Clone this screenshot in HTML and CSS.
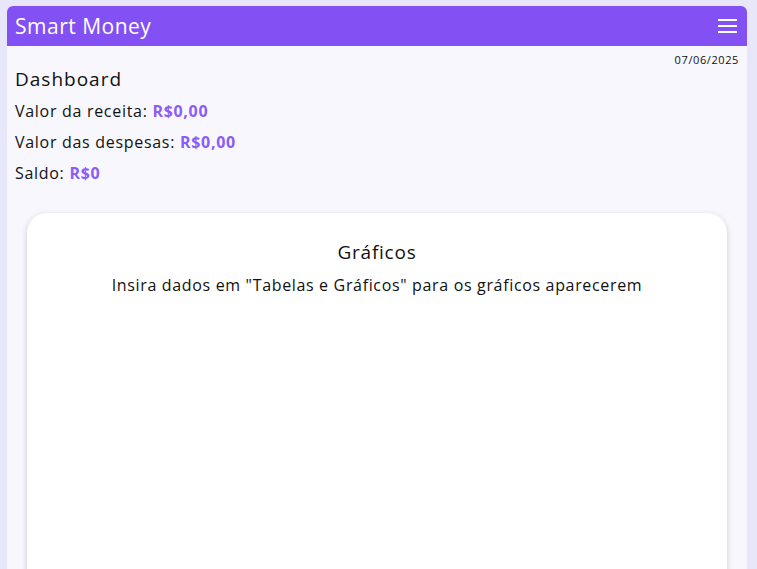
FILE: index.html
```html
<!DOCTYPE html>
<html lang="pt-BR">
<head>
<meta charset="utf-8">
<title>Smart Money</title>
<link rel="stylesheet" href="styles.css">
</head>
<body>
<div class="app">
  <header class="topbar">
    <span class="brand">Smart Money</span>
    <button class="menu" aria-label="Menu">
      <span></span><span></span><span></span>
    </button>
  </header>
  <main class="content">
    <div class="date">07/06/2025</div>
    <h1 class="title">Dashboard</h1>
    <p class="stat">Valor da receita: <strong>R$0,00</strong></p>
    <p class="stat">Valor das despesas: <strong>R$0,00</strong></p>
    <p class="stat">Saldo: <strong>R$0</strong></p>
    <section class="card">
      <h2 class="card-title">Gráficos</h2>
      <p class="card-text">Insira dados em "Tabelas e Gráficos" para os gráficos aparecerem</p>
    </section>
  </main>
</div>
</body>
</html>
```
FILE: styles.css
```css
* { box-sizing: border-box; }
html, body { height: 100%; }
body {
  margin: 0;
  padding: 6px 10px 0 7px;
  background: #e7e7f9;
  font-family: "Open Sans", sans-serif;
  color: #111;
  overflow: hidden;
}
.app {
  background: #f7f7fd;
  border-radius: 6px 6px 0 0;
  min-height: 100%;
}
.topbar {
  height: 40px;
  background: #8351f3;
  border-radius: 6px 6px 0 0;
  display: flex;
  align-items: center;
  justify-content: space-between;
  padding: 0 10px 0 8px;
}
.brand {
  color: #fff;
  font-size: 21px;
  letter-spacing: 0.5px;
}
.menu {
  width: 19px;
  height: 14px;
  padding: 0;
  border: 0;
  background: none;
  display: flex;
  flex-direction: column;
  justify-content: space-between;
}
.menu span {
  display: block;
  height: 2px;
  background: #fff;
}
.content {
  padding: 7px 8px 0 8px;
}
.date {
  text-align: right;
  font-size: 11px;
  line-height: 14px;
  letter-spacing: 0.6px;
}
.title {
  margin: 0;
  padding-bottom: 1px;
  font-size: 19px;
  font-weight: 400;
  line-height: 24px;
  letter-spacing: 1px;
}
.stat {
  margin: 8px 0 0;
  font-size: 16px;
  line-height: 23px;
  letter-spacing: 0.7px;
}
.stat strong {
  color: #8b5cf6;
  font-weight: 700;
}
.card {
  margin: 28px 12px 0;
  background: #fff;
  border-radius: 20px;
  box-shadow: 0 2px 6px rgba(0,0,0,0.18);
  height: 400px;
  text-align: center;
  padding-top: 26px;
}
.card-title {
  margin: 0;
  font-size: 19px;
  font-weight: 400;
  line-height: 26px;
  letter-spacing: 0.75px;
}
.card-text {
  margin: 9px 0 0;
  font-size: 16px;
  line-height: 22px;
  letter-spacing: 0.66px;
}
```
